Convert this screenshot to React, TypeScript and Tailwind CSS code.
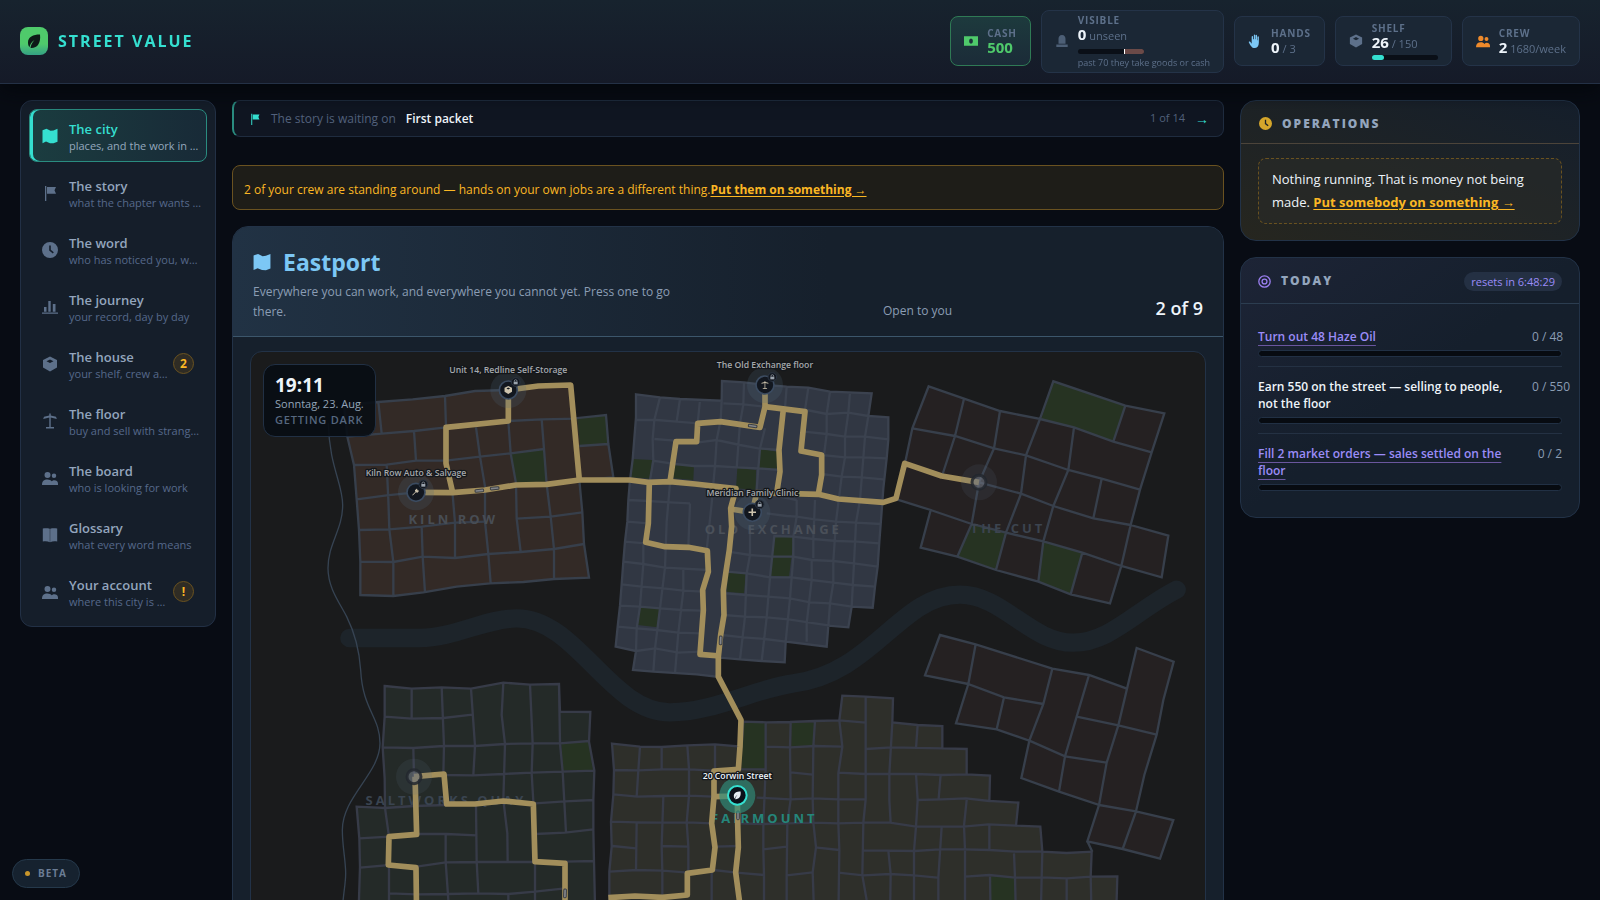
import type { ReactNode } from "react";

const icons = {
  map: <path d="M.5 2.200L4.500.8 8.500 2.800 11.500 2.400 15.500.8V13.800L11.500 15.300 8 15.200 4 13.600.5 15.200z" />,
  flag: <path d="M3 1h1.300v15H3zM5 2h9l-1.500 3.300L14 8.800H5z" />,
  clock: <path fillRule="evenodd" d="M8 0a8 8 0 1 0 0 16A8 8 0 0 0 8 0zM7.200 3.500h1.600v4.200l3 2.500-1 1.300-3.600-3z" />,
  chart: <path d="M0 13.500h16v1.300H0zM2 8h2.500v4.800H2zM6.300 2h2.400v10.800H6.300zM10.800 5h2.700v7.800h-2.700z" />,
  box: <path fillRule="evenodd" d="M8 0.500l7 3.500v7.500L8 15.500l-7-4V4zM8 3.500L4.500 5.300 8 7l3.500-1.700z" />,
  scales: <path d="M7.300.5h1.400v2l5.300 1.300.8 2.200-6.100-1.500V14H12v1.400H4V14h3.300V4.500L1.200 6 2 3.800l5.300-1.300z" />,
  people: <path d="M5.500 2a3 3 0 1 1 0 6 3 3 0 0 1 0-6zM12 3.500a2.200 2.200 0 1 1 0 4.500 2.200 2.200 0 0 1 0-4.500zM0 15c0-3.800 2-5.500 5.500-5.500 2 0 3.300.7 4.200 1.800 1.500-2 6.300-1.500 6.300 2.200V15z" />,
  book: <path d="M.8 1.500c3-.3 5-.2 7 .2v13.500C6 14.300 4 14.200.8 14.500zM8.200 1.700C10 1.300 12 1.200 15.200 1.500v13c-3-.3-5-.2-7 .7z" />,
  cash: <path fillRule="evenodd" d="M0 2.500h16v11H0zM8 5a2.200 3 0 1 0 0 6 2.200 3 0 0 0 0-6z" />,
  bust: <path d="M8 1c2.800 0 4 2 4 4.500V11H4V5.500C4 3 5.200 1 8 1zM1.500 12h13v2.800h-13z" />,
  hand: <path d="M6.700 1.200c0-1 1.500-1 1.500 0V6h.5V1.700c0-1 1.600-1 1.600 0V7h.5V3.300c0-1 1.600-1 1.600 0V10c0 4-2 6-5 6-2.700 0-3.800-1.500-6.400-6.300-.5-1.200.8-1.700 1.600-.8L4.200 11V3c0-1 1.600-1 1.600 0v3h.9z" />,
  target: (
    <g fill="none" stroke="currentColor" strokeWidth="1.600">
      <circle cx="8" cy="8" r="7" />
      <circle cx="8" cy="8" r="3" />
    </g>
  ),
  leaf: <path d="M14 1.500C7 1.500 2 4 2 9.500c0 2 .5 3.500 1.500 4.700C4 11.500 5.500 9 8.500 7 6 9.800 4.800 12 4.500 15 11.500 15.500 15 10 14 1.500z" />,
};

type IconName = keyof typeof icons;

const Icon = ({ name, className }: { name: IconName; className: string }) => (
  <svg viewBox="0 0 16 16" fill="currentColor" aria-hidden="true" className={`shrink-0 ${className}`}>
    {icons[name]}
  </svg>
);

const navItems: { icon: IconName; title: string; text: string; badge?: string; active?: boolean }[] = [
  { icon: "map", title: "The city", text: "places, and the work in …", active: true },
  { icon: "flag", title: "The story", text: "what the chapter wants …" },
  { icon: "clock", title: "The word", text: "who has noticed you, w…" },
  { icon: "chart", title: "The journey", text: "your record, day by day" },
  { icon: "box", title: "The house", text: "your shelf, crew a…", badge: "2" },
  { icon: "scales", title: "The floor", text: "buy and sell with strang…" },
  { icon: "people", title: "The board", text: "who is looking for work" },
  { icon: "book", title: "Glossary", text: "what every word means" },
  { icon: "people", title: "Your account", text: "where this city is …", badge: "!" },
];

const SideNav = () => (
  <nav className="w-[196px] shrink-0 flex flex-col gap-1 p-2 rounded-xl border border-[#223045] bg-[#151e2a]">
    {navItems.map((item) => (
      <a
        key={item.title}
        href="#"
        className={`flex items-center h-[53px] pl-3 pr-1 rounded-lg border ${
          item.active
            ? "border-[#2a8c80] bg-linear-to-r from-[#1b3d40] to-[#182a37] shadow-[inset_3px_0_0_#35dfd0]"
            : "border-transparent"
        }`}
      >
        <Icon name={item.icon} className={`size-4 mr-[11px] ${item.active ? "text-[#35dfd0]" : "text-[#5d708a]"}`} />
        <span className="flex-1 min-w-0 pt-[3px] whitespace-nowrap">
          <span className={`block text-[13px] leading-[17px] font-semibold ${item.active ? "text-[#35dfd0]" : "text-[#93a5bd]"}`}>
            {item.title}
          </span>
          <span className={`block text-[11px] leading-[15px] ${item.active ? "text-[#94a8bd]" : "text-[#56698a]"}`}>
            {item.text}
          </span>
        </span>
        {item.badge && (
          <span className="size-[21px] mr-2 shrink-0 rounded-full border border-[#6b5320] bg-[#2f2c24] text-[#fbb724] text-xs font-bold flex items-center justify-center">
            {item.badge}
          </span>
        )}
      </a>
    ))}
  </nav>
);

const Stat = (props: { icon: IconName; iconColor: string; label: string; children: ReactNode; green?: boolean }) => {
  const { icon, iconColor, label, children, green } = props;
  return (
    <div
      className={`flex items-center gap-[9px] min-h-[50px] px-[13px] py-[3px] rounded-lg border ${
        green ? "border-[#2f7a55] bg-linear-to-b from-[#1d3a3d] to-[#1b2b38]" : "border-[#243348] bg-[#1b2735]"
      }`}
    >
      <Icon name={icon} className={`size-[14px] ${iconColor}`} />
      <div>
        <div className="text-[10px] leading-[13px] font-bold tracking-[0.8px] text-[#5d708a]">{label}</div>
        {children}
      </div>
    </div>
  );
};

const Value = ({ value, note }: { value: string; note: string }) => (
  <div className="text-[11px] leading-[15px] text-[#5d708a]">
    <b className="text-[15px] text-[#eef4fa]">{value}</b> {note}
  </div>
);

const Header = () => (
  <header className="sticky top-0 z-10 flex items-center justify-between h-[84px] px-5 pb-px border-b border-[#243146] bg-linear-to-b from-[#17232e] to-[#151a28] shadow-[0_6px_20px_#04070c]">
    <a href="#" className="flex items-center gap-[10px]">
      <span className="size-7 rounded-lg bg-linear-to-b from-60% from-[#4fca6b] to-[#35a184] flex items-center justify-center">
        <Icon name="leaf" className="size-4 text-[#0d1a17]" />
      </span>
      <span className="text-base font-bold tracking-[2px] text-[#35dfd0]">STREET VALUE</span>
    </a>
    <div className="flex items-center gap-[10px]">
      <Stat icon="cash" iconColor="text-[#4fca6b]" label="CASH" green>
        <div className="text-[15px] leading-[15px] font-bold text-[#4fca6b]">500</div>
      </Stat>
      <Stat icon="bust" iconColor="text-[#4d5f76]" label="VISIBLE">
        <Value value="0" note="unseen" />
        <div className="mt-[6px] w-[66px] h-[5px] rounded-full bg-[#0a0f17] flex justify-end overflow-hidden">
          <div className="w-5 border-l border-white bg-[#6b4a48]" />
        </div>
        <div className="mt-[3px] text-[9px] leading-3 text-[#5d708a]">past 70 they take goods or cash</div>
      </Stat>
      <Stat icon="hand" iconColor="text-[#7cc7f5]" label="HANDS">
        <Value value="0" note="/ 3" />
      </Stat>
      <Stat icon="box" iconColor="text-[#5d708a]" label="SHELF">
        <Value value="26" note="/ 150" />
        <div className="mt-1 w-[66px] h-[5px] rounded-full bg-[#0a0f17]">
          <div className="w-3 h-full rounded-full bg-[#35dfd0]" />
        </div>
      </Stat>
      <Stat icon="people" iconColor="text-[#ef8a2b]" label="CREW">
        <Value value="2" note="1680/week" />
      </Stat>
    </div>
  </header>
);

const districts = [
  {
    at: "translate(0 0)",
    fill: "#332a26",
    line: "#373f4b",
    outline:
      "M312 195L415 186 518 178 615 168 705 153 805 150 895 138 992 135 1004 235 1098 225 1105 312 1120 412 1018 420 1027 517 1032 612 1047 713 942 717 850 726 750 730 650 740 550 757 460 768 361 765 361 665 357 570 350 478 342 375 322 290Z",
    parks: "M812 342L912 327 916 425 828 427ZM1012 236L1098 225 1103 308 1020 316Z",
    streets:
      "M322 290L425 281 522 273 618 262M805 243L905 238 1012 236M342 375L440 374 528 362 618 362 720 350 812 340 912 327M350 478L440 466 528 457M357 570L448 568 545 560 645 548 740 545M361 665L460 666 548 650 645 654 745 642 842 636 942 627 1032 612M1018 318L1105 312M830 536L932 530 1027 517M415 186L425 281M522 273L528 362M440 374L445 478 448 568 460 666 460 768M545 560L548 650 555 757M638 465L645 548 645 654M615 168L618 262M708 262L720 350 735 440V545L745 642 752 730M805 243L812 340 828 430 830 536 842 636M905 238L912 327 920 433 932 530 942 627V717",
  },
  {
    at: "translate(1080 0)",
    fill: "#313743",
    line: "#3b424f",
    outline:
      "M108 163L180 172 240 177 365 182 366 123 432 127 495 135 560 140 625 143 690 155 815 160 805 228 865 232 865 298 860 355 850 445 843 540 838 605 833 680 825 740 818 803 755 800 745 862 685 857 680 920 557 905 554 967 485 963 420 958 360 953 350 1010 290 1003 160 995 99 990 108 933 47 920 53 860 60 797 65 733 70 665 75 605 82 545 85 480 90 420 98 358 103 295 108 232Z",
    parks:
      "M98 357L156 360 150 416 92 412ZM225 373L282 376 280 420 220 415ZM480 326L532 335 530 390 475 385ZM412 384L468 390 467 450 408 445ZM523 588L582 592 567 710 512 707ZM385 697L437 702 432 760 380 755ZM120 802L180 806 172 862 114 855Z",
    streets:
      "M108 240L170 240 230 245 295 250M163 297L225 302M290 308L350 300 420 315 475 325 540 330M370 190L430 193 495 200M620 210L680 222 745 218 805 228M612 275L680 282 735 290 795 290 865 298M665 345L735 352 790 352 860 355M158 362L225 372 282 378 345 378 410 382 475 385 540 390M665 402L725 410 785 412 850 418M85 480L145 483 210 487 270 490M540 470L590 480M82 545L145 550M500 520L560 528 590 530 645 538 708 545 768 548 843 552M75 605L135 610M520 588L580 590 640 597 710 603 770 605 838 610M70 665L130 672 195 683 325 690M385 635L450 645 515 650 580 650 635 660 700 663 762 670 833 680M65 733L125 740 190 745 250 752 310 755M380 695L440 700 510 712 575 712 635 720 700 728 760 735 825 740M60 797L120 800 180 805 245 810 305 812M375 760L440 765 505 770 570 775 630 787 690 790 755 800M53 860L110 865 170 870 235 878 300 880M370 825L435 830 500 832 565 838 690 857M108 933L165 925 235 938 300 935M365 885L430 892 495 897 557 905M180 172L163 240 158 297 160 362 150 420M240 177L230 245M300 180L293 250M365 182L362 240 350 300 345 378 340 430M432 127L430 193 420 250 415 315 410 385M495 265L480 325 475 385 470 450M560 140L555 205M625 143L615 210M690 155L680 222V282L672 345M750 158L745 218 735 290V352L725 410 708 545 700 663V728L690 790 685 857M805 228L795 290 780 480 768 548 762 670 755 800M210 430L200 545 195 683 180 805 165 925 160 995M270 490L265 620M340 435L335 490 320 630M590 480V530L580 590M645 480L640 597V655M450 560V645L440 700 435 830 420 958M523 588L510 712 500 832 485 963M580 590V650L570 775 557 905M635 660V720L620 850V905M130 610V672L120 800 110 865 108 933M250 690V752L235 878 225 1000",
  },
  {
    at: "translate(1920 0)",
    fill: "#252122",
    line: "#373f4b",
    outline:
      "M146 139L252 176 360 213 480 237 520 124 736 197 853 220 815 337 780 449 752 555 865 587 845 712 724 678 690 790 572 763 475 725 348 690 232 650 122 623 152 510 50 478 75 370 97 265Z",
    parks: "M520 124L736 197 700 305 582 262 484 237ZM275 552L378 578 348 688 234 650ZM490 606L607 638 572 763 475 725Z",
    streets:
      "M97 265L225 288 342 325 438 346 565 390 665 416 780 449M480 237L582 262 700 305 815 337M297 427L423 461 520 498 640 535 752 555M50 478L152 510 275 552 378 578 490 604 607 638 724 678M252 176L225 288 187 405M360 213L342 325 297 427 275 552 232 650M480 237L438 346 423 461 378 578 348 690M582 262L565 390 520 498 490 604 475 725M665 416L640 535M752 555L724 678M607 638L572 763M736 197L700 305",
  },
  {
    at: "translate(1980 840)",
    fill: "#252122",
    line: "#373f4b",
    outline:
      "M120 45L227 73 457 146 567 165 681 206 710 84 821 125 790 240 770 344 733 465 708 574 820 600 780 716 668 687 562 664 597 555 477 515 364 474 388 362 290 328 168 310 205 192 75 166Z",
    parks: "",
    streets:
      "M227 73L205 192 312 232 430 252M312 232L290 328M457 146L430 252 388 362 495 409 620 428M495 409L477 515M567 165L530 290 495 409M530 290L655 316 770 344M681 206L655 316 620 428 597 555 708 574 668 687M562 664L577 695",
  },
  {
    at: "translate(0 780)",
    fill: "#242a28",
    line: "#373b48",
    outline:
      "M434 258L515 266 605 262 693 266 790 248 870 254 957 252 960 335 1051 336 1047 425 1063 512 1060 600 1060 690 1062 785 1066 960 355 960 360 800 358 715 350 620 435 624 434 535 428 442 434 350Z",
    parks: "M965 430L1047 426 1058 510 968 510Z",
    streets:
      "M434 350L515 356 610 354 697 344M428 442L520 444 610 438 705 438 795 432 878 430 960 430 1047 423M520 444L522 530M515 266V356M605 262L612 438 610 525M693 266L705 438 700 525M790 248L785 345 795 432 790 600 802 700 803 785M870 254L878 430 875 520 880 605M957 252L960 430 968 515 978 697M610 525L700 526 790 522 875 518 968 515 1063 512M885 610L975 604 1060 600M435 624L522 618 620 615M435 624L447 710 358 715M530 702L620 702 710 706M617 702V785L625 900V960M708 615L710 785 715 880M530 800L617 787 710 786 885 786V960M360 803L447 795V960M448 880L530 883 625 882 715 880 805 882 885 875 975 865M805 882V960M885 702L975 698 1060 688M975 785L1062 783",
  },
  {
    at: "translate(1080 900)",
    fill: "#2e2f2a",
    line: "#373b48",
    outline:
      "M36 311L120 320 185 321 262 316 345 313 425 320 430 245 500 247 570 246 645 243 718 241 727 167 797 170 879 175 877 247 953 255 1027 258 1027 325 1100 327 1100 403 1170 407 1168 483 1255 488 1248 557 1321 560 1327 635 1400 639 1475 635 1472 710 1552 709 1548 840 28 840 28 695 35 620 33 545 40 465 42 390Z",
    parks: "M432 247L497 250 493 388 425 388ZM575 248L642 248 642 316 575 318ZM1168 710L1243 713 1247 780 1172 780Z",
    streets:
      "M42 390L115 391 190 388 267 388 340 392M500 320L572 322 645 318 727 320M797 327L875 322 1027 325M718 241L797 248M420 388H497M572 397L638 404M715 398L797 402 868 402 948 402 1025 405 1100 403M40 463L112 470 190 468 267 467 340 470M470 473L572 478 640 475 715 478 795 478M950 480L1025 478 1098 475 1168 483M33 545L110 547 185 548 262 547 335 550M415 550L490 552 562 550 640 548 715 550 790 548 870 548 948 560 1090 560 1165 553 1248 557M38 618L108 625M185 618L265 620M345 620L415 618M490 628L560 620M645 622L718 630M790 632L865 632 943 633 1020 628 1090 628 1170 630 1245 635 1327 635M28 695L110 690 187 692 265 698M340 690L410 698 492 705M560 706L638 697M715 698L790 706 870 702 942 706 1012 713M1095 710L1168 705 1245 713 1325 712 1400 715 1472 710M120 320L115 391 110 470M110 547L108 690M185 321V388M262 316L267 388V467L260 547 265 620V698M190 470L185 618 187 692V840M335 690V840M345 313V390M497 247V388L490 552V628L492 705V840M572 246L570 322 572 478 562 550 560 706V840M645 243L640 320 638 475 640 548 648 622 638 697 643 840M718 241L727 320 715 400V550L718 630 715 840M797 170V478L790 548 787 706 800 780M877 247L868 402V480L872 548M865 632L872 702 870 840M953 255L948 325M948 402L953 480 948 560 942 633V840M1022 403L1016 475M1025 560L1015 713V840M1100 480L1092 557 1095 630V840M1168 557V630M1242 640L1245 713 1248 840M1327 635L1325 712 1322 840M1400 715V840M1472 710L1475 840M1170 710L1172 840",
  },
];

const routes = [
  "M528 457L638 458 735 450 828 435 920 433 1018 420 1170 420 1225 427 1290 425 1365 432 1488 446 1472 505 1475 560 1468 630 1458 695 1450 750 1452 825 1442 885 1435 950V1010L1503 1140 1500 1220 1495 1288 1422 1293V1370L1415 1450 1425 1522 1417 1590 1342 1600V1665L1267 1672 1185 1668 1105 1673",
  "M638 458L618 370V262L805 243V150L895 138 992 135 1018 420",
  "M1228 427L1225 550 1217 607 1275 620 1345 622 1402 632 1405 695 1388 750 1390 810 1380 943 1440 948",
  "M1290 425L1308 305H1370L1373 250 1442 245 1560 262 1575 200V135",
  "M1575 200L1695 215 1683 333 1745 345V405L1735 463",
  "M1630 208L1617 330 1620 395 1610 460",
  "M1537 517L1550 458 1735 463 1795 477 1930 487 1968 475 1994 370 2105 408 2217 427",
  "M1472 507L1537 517",
  "M522 1310L612 1302 620 1392 705 1392 790 1383 880 1392 885 1565 975 1570V1740",
  "M525 1310L530 1483 447 1490 445 1575 528 1583 530 1740",
  "M1422 1370L1492 1368 1493 1450 1495 1522 1487 1597 1498 1680V1740",
];

const districtNames = [
  { x: 640, y: 552, name: "KILN ROW", color: "#484d54" },
  { x: 1600, y: 582, name: "OLD EXCHANGE", color: "#4a5059" },
  { x: 2304, y: 580, name: "THE CUT", color: "#3c444f" },
  { x: 618, y: 1395, name: "SALTWORKS QUAY", color: "#3a4450" },
  { x: 1573, y: 1448, name: "FAIRMOUNT", color: "#25867b" },
];

const places: { x: number; y: number; name: string; icon?: IconName; ly: number }[] = [
  { x: 805, y: 150, name: "Unit 14, Redline Self-Storage", icon: "box", ly: 99 },
  { x: 528, y: 457, name: "Kiln Row Auto & Salvage", ly: 408 },
  { x: 1575, y: 135, name: "The Old Exchange floor", icon: "scales", ly: 84 },
  { x: 1537, y: 517, name: "Meridian Family Clinic", ly: 468 },
];

const cars = [
  { x: 718, y: 452, r: -5 },
  { x: 764, y: 445, r: -5 },
  { x: 1538, y: 258, r: 8 },
  { x: 1442, y: 901, r: 92 },
  { x: 975, y: 1660, r: 92 },
  { x: 1494, y: 1426, r: 90 },
];

const CityMap = () => (
  <div className="relative rounded-xl border border-[#223247] bg-[#1a1b1c] overflow-hidden">
    <svg viewBox="33 36 2862 1680" className="block w-full" role="img" aria-label="Map of Eastport">
      <path d="M328 894H540C640 894 740 835 830 835 1010 835 1110 1117 1290 1117 1420 1117 1540 1048 1660 1030 1900 1000 1980 764 2160 764 2290 764 2370 908 2500 908 2610 908 2690 810 2810 749" fill="none" stroke="#1d242a" strokeWidth="55" strokeLinecap="round" />
      {districts.map((d) => (
        <g key={d.at} transform={d.at}>
          <path d={d.outline} fill={d.fill} />
          <path d={d.parks} fill="#263322" />
          <path d={d.streets + d.outline} fill="none" stroke={d.line} strokeWidth="7" />
        </g>
      ))}
      <path d="M265 250C268 380 308 430 308 495 308 570 264 610 264 685 264 745 300 790 320 830 345 880 358 930 362 990 368 1110 420 1130 420 1210 420 1300 307 1370 307 1470 307 1520 317 1560 317 1600 317 1640 308 1660 305 1740" fill="none" stroke="#364352" strokeWidth="4" />
      {districtNames.map((d) => (
        <text key={d.name} x={d.x} y={d.y} fill={d.color} textAnchor="middle" className="text-[39px] font-bold tracking-[9px]">
          {d.name}
        </text>
      ))}
      <g fill="none" strokeLinejoin="round">
        {routes.map((r) => (
          <path key={r} d={r} stroke="#a28e5b" strokeWidth="17" />
        ))}
      </g>
      {cars.map((c) => (
        <rect key={`${c.x}-${c.y}`} x={c.x - 13} y={c.y - 4} width="26" height="8" rx="3" fill="#83858a" stroke="#3b3f45" strokeWidth="3" transform={`rotate(${c.r} ${c.x} ${c.y})`} />
      ))}
      {[[2217, 427], [522, 1310]].map(([x, y]) => (
        <g key={x}>
          <circle cx={x} cy={y} r="54" fill="#5a6a7c" fillOpacity=".14" />
          <circle cx={x} cy={y} r="21" fill="#6f7480" fillOpacity=".55" stroke="#22272e" strokeOpacity=".85" strokeWidth="9" />
        </g>
      ))}
      {places.map((p) => (
        <g key={p.name}>
          <circle cx={p.x} cy={p.y} r="54" fill="#52677c" fillOpacity=".2" />
          <circle cx={p.x} cy={p.y} r="27" fill="#12171f" stroke="#3b4b60" strokeWidth="5" />
          <g transform={`translate(${p.x - 13} ${p.y - 13}) scale(1.600)`} fill="#cdc3ad">
            {p.icon && icons[p.icon]}
            {p.name.startsWith("Kiln") && <path d="M1 13l6-6-1-3 4-3 1 3 3 1-3 4-3-1-6 6z" />}
            {p.name.startsWith("Meridian") && <path d="M6.500 1h3v5.500H15v3H9.500V15h-3V9.500H1v-3h5.500z" />}
          </g>
          <circle cx={p.x + 22} cy={p.y - 24} r="13" fill="#12171f" stroke="#2b3543" strokeWidth="3" />
          <rect x={p.x + 16} y={p.y - 25} width="12" height="8" fill="#9aa3ad" />
          <path d={`M${p.x + 18} ${p.y - 25}v-2a4 4 0 0 1 8 0v2`} fill="none" stroke="#9aa3ad" strokeWidth="2" />
        </g>
      ))}
      <circle cx="1492" cy="1366" r="54" fill="#2f8f7c" fillOpacity=".65" />
      <circle cx="1492" cy="1366" r="28" fill="#0b1119" stroke="#35dfd0" strokeWidth="6" />
      <g transform="translate(1478 1352) scale(1.700)" fill="#e6edf2">
        {icons.leaf}
      </g>
      <g stroke="#14171b" strokeWidth="8" strokeLinejoin="round" textAnchor="middle" className="text-[26px] font-semibold [paint-order:stroke]">
        {places.map((p) => (
          <text key={p.name} x={p.x} y={p.ly} fill="#a6a9ac">
            {p.name}
          </text>
        ))}
        <text x="1492" y="1317" fill="#eef4fa">
          20 Corwin Street
        </text>
      </g>
    </svg>
    <div className="absolute top-3 left-3 px-[11px] pt-[9px] pb-2 rounded-xl border border-[#213044] bg-[#080d14]/90">
      <div className="text-[19px] leading-[22px] font-bold text-[#eef4fa]">19:11</div>
      <div className="text-[11px] leading-[15px] text-[#94a5b8]">Sonntag, 23. Aug.</div>
      <div className="text-[11px] leading-[17px] font-semibold tracking-[0.8px] text-[#56677f]">GETTING DARK</div>
    </div>
  </div>
);

const goals = [
  { text: "Turn out 48 Haze Oil", count: "0 / 48", link: true },
  { text: "Earn 550 on the street — selling to people, not the floor", count: "0 / 550" },
  { text: "Fill 2 market orders — sales settled on the floor", count: "0 / 2", link: true },
];

const App = () => {
  return (
    <div className="h-screen overflow-y-auto [scrollbar-width:none] bg-[#080c14] text-[#eef4fa] font-['Open_Sans','Noto_Sans',sans-serif]">
      <Header />
      <div className="flex items-start gap-4 px-5 py-4">
        <SideNav />
        <main className="flex-1 min-w-0">
          <a href="#" className="flex items-center h-[37px] px-[14px] rounded-lg border border-l-2 border-[#1f2c3f] border-l-[#2a8c80] bg-[#101622] text-xs">
            <Icon name="flag" className="size-3 mr-[10px] ml-px text-[#35dfd0]" />
            <span className="text-[#52617c]">The story is waiting on</span>
            <span className="ml-[10px] font-semibold">First packet</span>
            <span className="ml-auto text-[11px] text-[#52617c]">1 of 14</span>
            <span className="ml-[10px] text-sm text-[#35dfd0] font-bold">→</span>
          </a>
          <div className="mt-7 h-[45px] flex items-center px-[11px] pt-1 rounded-lg border border-[#6a5220] bg-[#1e1d18] text-xs text-[#fbb724]">
            2 of your crew are standing around — hands on your own jobs are a different thing.
            <a href="#" className="font-bold underline underline-offset-2">Put them on something →</a>
          </div>
          <section className="mt-4 rounded-2xl border border-[#223247] bg-[#16202c] overflow-hidden">
            <div className="flex items-end justify-between px-5 pt-[19px] pb-[14px] border-b border-[#3c566b] bg-linear-to-r from-[#213244] to-[#16202c] to-60%">
              <div className="max-w-[440px]">
                <h1 className="flex items-center gap-3 text-[23px] leading-8 font-bold text-[#7cc7f5]">
                  <Icon name="map" className="size-[18px]" />
                  Eastport
                </h1>
                <p className="mt-1 text-xs leading-5 text-[#8b9db4]">
                  Everywhere you can work, and everywhere you cannot yet. Press one to go there.
                </p>
              </div>
              <div className="flex items-baseline justify-between w-80">
                <span className="text-xs text-[#8b9db4]">Open to you</span>
                <span className="text-lg font-semibold">2 of 9</span>
              </div>
            </div>
            <div className="px-[17px] pt-[14px] pb-4">
              <CityMap />
            </div>
          </section>
        </main>
        <aside className="w-[340px] shrink-0 flex flex-col gap-4">
          <section className="rounded-2xl border border-[#223247] bg-linear-to-tr from-[#26261f] to-[#151f2c]">
            <h2 className="flex items-center gap-[10px] h-[43px] px-[18px] pt-[3px] border-b border-[#4c443a] text-xs font-extrabold tracking-[2px] text-[#93a5bd]">
              <Icon name="clock" className="size-[13px] text-[#d5a62b]" />
              OPERATIONS
            </h2>
            <p className="mx-[17px] mt-[14px] mb-4 px-[13px] py-[9px] rounded-lg border border-dashed border-[#6a5220] bg-[#2a2b28]/60 text-[13px] leading-[23px]">
              Nothing running. That is money not being made.{" "}
              <a href="#" className="font-bold text-[#fbb724] underline underline-offset-2">Put somebody on something →</a>
            </p>
          </section>
          <section className="rounded-2xl border border-[#223247] bg-linear-to-br from-[#1d2436] to-[#151f2c] to-50%">
            <div className="flex items-center justify-between h-[46px] px-[17px] pt-px border-b border-[#2c3d50]">
              <h2 className="flex items-center gap-[10px] text-xs font-extrabold tracking-[2px] text-[#93a5bd]">
                <Icon name="target" className="size-[13px] text-[#9b7ff0]" />
                TODAY
              </h2>
              <span className="px-[7px] rounded-full bg-[#243043] text-[11px] leading-[19px] text-[#9b8cf8]">resets in 6:48:29</span>
            </div>
            <ul className="px-[17px] pt-[13px] pb-[17px] divide-y divide-[#243143]">
              {goals.map((goal) => (
                <li key={goal.text} className="pt-[11px] pb-[9px]">
                  <div className="flex gap-5">
                    <div className="flex-1 text-xs leading-[17px] font-semibold">
                      {goal.link ? (
                        <a href="#" className="text-[#9b8cf8] underline decoration-1 decoration-[#6a569e] underline-offset-4">{goal.text}</a>
                      ) : (
                        goal.text
                      )}
                    </div>
                    <span className="w-[30px] text-right whitespace-nowrap text-xs leading-[17px] text-[#8b9db4]">{goal.count}</span>
                  </div>
                  <div className="mt-[5px] h-[7px] rounded-full border border-[#213044] bg-[#070b11]" />
                </li>
              ))}
            </ul>
          </section>
        </aside>
      </div>
      <div className="fixed left-3 bottom-3 flex items-center gap-2 h-[29px] px-3 rounded-full border border-[#25394b] bg-[#16222f] text-[10px] font-bold tracking-[1px] text-[#6b7d95]">
        <span className="size-[5px] rounded-full bg-[#c9962b]" />
        BETA
      </div>
    </div>
  );
};

export default App;
